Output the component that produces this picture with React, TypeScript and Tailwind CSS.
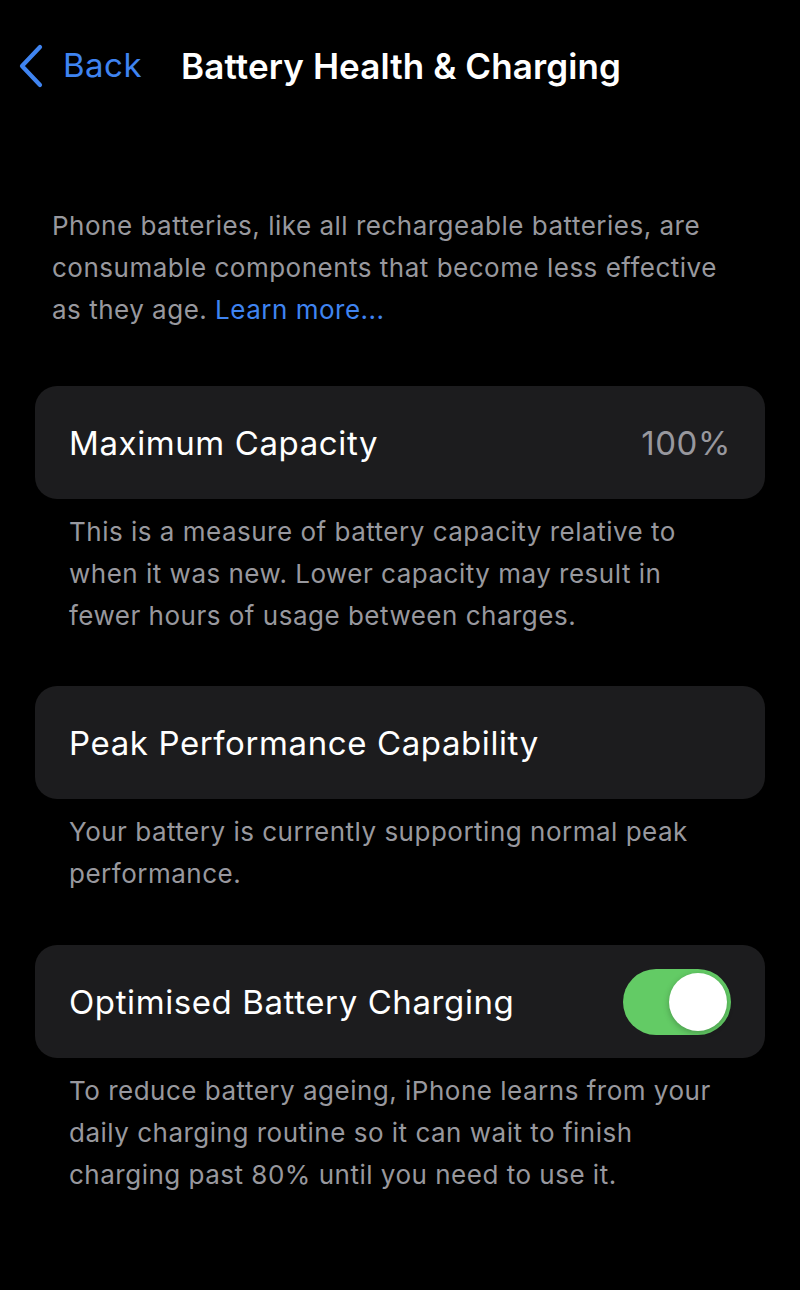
const font = { fontFamily: "Inter, 'Noto Sans', sans-serif" };

function Card({ children }: { children: React.ReactNode }) {
  return (
    <div className="mx-[35px] flex h-[113px] items-center justify-between rounded-[22px] bg-[#1c1c1e] pl-[34px] pr-[34px] pt-[3px]">
      {children}
    </div>
  );
}

function Footer({ children }: { children: React.ReactNode }) {
  return (
    <p className="mx-[69px] mt-[12px] text-[26px] leading-[42px] tracking-[0.5px] text-[#98989e]">
      {children}
    </p>
  );
}

function Toggle({ on }: { on: boolean }) {
  return (
    <div
      className={
        on
          ? "-mt-[3px] flex h-[66px] w-[108px] items-center justify-end rounded-full bg-[#63cb65] px-[4px]"
          : "-mt-[3px] flex h-[66px] w-[108px] items-center justify-start rounded-full bg-[#39393d] px-[4px]"
      }
    >
      <div className="h-[58px] w-[58px] rounded-full bg-white shadow-[0_2px_6px_rgba(0,0,0,0.25)]" />
    </div>
  );
}

export default function App() {
  return (
    <div className="min-h-[1290px] w-[800px] bg-black text-white" style={font}>
      <header className="flex h-[132px] items-center pl-[18px]">
        <svg width="26" height="44" viewBox="0 0 26 44" className="text-[#3f84f1]">
          <path
            d="M22 3 L4 22 L22 41"
            fill="none"
            stroke="currentColor"
            strokeWidth="4.2"
            strokeLinecap="round"
            strokeLinejoin="round"
          />
        </svg>
        <span className="ml-[19px] text-[33px] tracking-[0.5px] text-[#3f84f1]">Back</span>
        <h1 className="ml-[39px] text-[35px] font-semibold tracking-[0.1px]">
          Battery Health &amp; Charging
        </h1>
      </header>

      <p className="mx-[52px] mt-[73px] text-[26px] leading-[42px] tracking-[0.5px] text-[#98989e]">
        Phone batteries, like all rechargeable batteries, are consumable
        components that become less effective as they age.{" "}
        <span className="text-[#3f84f1]">Learn more...</span>
      </p>

      <div className="mt-[55px]">
        <Card>
          <span className="text-[33px] tracking-[0.6px]">Maximum Capacity</span>
          <span className="text-[33px] tracking-[0.6px] text-[#98989e]">100%</span>
        </Card>
        <Footer>
          This is a measure of battery capacity relative to when it was new.
          Lower capacity may result in fewer hours of usage between charges.
        </Footer>
      </div>

      <div className="mt-[49px]">
        <Card>
          <span className="text-[33px] tracking-[0.6px]">Peak Performance Capability</span>
        </Card>
        <Footer>
          Your battery is currently supporting normal peak performance.
        </Footer>
      </div>

      <div className="mt-[50px]">
        <Card>
          <span className="text-[33px] tracking-[0.6px]">Optimised Battery Charging</span>
          <Toggle on />
        </Card>
        <Footer>
          To reduce battery ageing, iPhone learns from your daily charging
          routine so it can wait to finish charging past 80% until you need to
          use it.
        </Footer>
      </div>
    </div>
  );
}
